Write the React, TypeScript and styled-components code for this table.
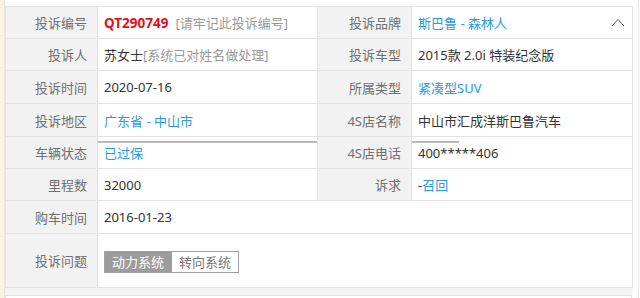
import styled, { createGlobalStyle } from 'styled-components';

const GlobalStyle = createGlobalStyle`
  html, body {
    margin: 0;
    padding: 0;
    background: #ffffff;
    overflow: hidden;
  }
  body {
    font-family: "Noto Sans", "Noto Sans CJK SC", sans-serif;
    font-size: 13px;
    color: #333;
  }
`;

const Page = styled.div`
  display: flex;
  height: 298px;
  overflow: hidden;
`;

const SideStrip = styled.div`
  width: 4px;
  flex-shrink: 0;
  background: #faf2e2;
  border-right: 1px solid #efe7d6;
`;

const Content = styled.div`
  flex: 1;
  min-width: 0;
  padding-top: 6px;
`;

const Gutter = styled.div`
  width: 5px;
  margin-right: 1px;
  flex-shrink: 0;
  border-right: 1px solid #ececec;
`;

const Table = styled.div`
  display: grid;
  grid-template-columns: 92px 220px 94px 1fr;
  grid-template-rows: 32px 32px 33px 33px 32px 32px 33px 54px;
  border-top: 1px solid #e3e3e3;
  border-left: 1px solid #e3e3e3;
`;

const Cell = styled.div`
  position: relative;
  box-sizing: border-box;
  display: flex;
  align-items: center;
  border-right: 1px solid #e3e3e3;
  border-bottom: 1px solid #e3e3e3;
  white-space: nowrap;
  overflow: hidden;
`;

const Label = styled(Cell)`
  justify-content: flex-end;
  padding-right: 10px;
  background: #f2f2f2;
  color: #707070;
`;

const Value = styled(Cell)<{ $span?: number; $bar?: number }>`
  padding-left: 6px;
  background: #fff;
  grid-column: span ${({ $span }) => $span ?? 1};

  /* stray scroll thumb drawn across the top of a cell */
  &::before {
    content: '';
    display: ${({ $bar }) => ($bar ? 'block' : 'none')};
    position: absolute;
    left: 0;
    top: 4px;
    width: ${({ $bar }) => $bar ?? 0}px;
    height: 2px;
    background: #b8b8b8;
  }
`;

const Code = styled.span`
  color: #e60f19;
  font-size: 13.5px;
  font-weight: 700;
  margin-right: 7px;
`;

const Hint = styled.span`
  color: #9a9a9a;
`;

const Link = styled.span`
  color: #2b9ade;
`;

const Toggle = styled.svg`
  position: absolute;
  right: 7px;
  top: 11px;
`;

const TagGroup = styled.div`
  display: flex;
  margin-top: 2px;
`;

const Tag = styled.span<{ $active?: boolean }>`
  box-sizing: border-box;
  height: 22px;
  padding: 0 7px;
  display: flex;
  align-items: center;
  border: 1px solid #a0a0a0;
  background: ${({ $active }) => ($active ? '#9c9c9c' : '#fff')};
  color: ${({ $active }) => ($active ? '#fff' : '#777')};
  & + & {
    border-left: none;
  }
`;

const Gap = styled.div`
  height: 7px;
  background: #f4f4f4;
`;

const NextPanel = styled.div`
  height: 40px;
  margin-right: 1px;
  border-top: 1px solid #e3e3e3;
  border-left: 1px solid #e3e3e3;
  border-right: 1px solid #e3e3e3;
  background: #fff;
`;

export default function App() {
  return (
    <>
      <GlobalStyle />
      <Page>
        <SideStrip />
        <Content>
          <Table>
            <Label>投诉编号</Label>
            <Value>
              <Code>QT290749</Code>
              <Hint>[请牢记此投诉编号]</Hint>
            </Value>
            <Label>投诉品牌</Label>
            <Value>
              <Link>斯巴鲁 - 森林人</Link>
              <Toggle width="14" height="9" viewBox="0 0 14 9">
                <polyline points="1,8 7,1.5 13,8" fill="none" stroke="#666" strokeWidth="1" />
              </Toggle>
            </Value>

            <Label>投诉人</Label>
            <Value>
              苏女士<Hint>[系统已对姓名做处理]</Hint>
            </Value>
            <Label>投诉车型</Label>
            <Value>2015款 2.0i 特装纪念版</Value>

            <Label>投诉时间</Label>
            <Value>2020-07-16</Value>
            <Label>所属类型</Label>
            <Value>
              <Link>紧凑型SUV</Link>
            </Value>

            <Label>投诉地区</Label>
            <Value>
              <Link>广东省 - 中山市</Link>
            </Value>
            <Label>4S店名称</Label>
            <Value>中山市汇成洋斯巴鲁汽车</Value>

            <Label>车辆状态</Label>
            <Value $bar={222}>
              <Link>已过保</Link>
            </Value>
            <Label>4S店电话</Label>
            <Value $bar={47}>400*****406</Value>

            <Label>里程数</Label>
            <Value>32000</Value>
            <Label>诉求</Label>
            <Value>
              -<Link>召回</Link>
            </Value>

            <Label>购车时间</Label>
            <Value $span={3}>2016-01-23</Value>

            <Label>投诉问题</Label>
            <Value $span={3}>
              <TagGroup>
                <Tag $active>动力系统</Tag>
                <Tag>转向系统</Tag>
              </TagGroup>
            </Value>
          </Table>
          <Gap />
          <NextPanel />
        </Content>
        <Gutter />
      </Page>
    </>
  );
}
